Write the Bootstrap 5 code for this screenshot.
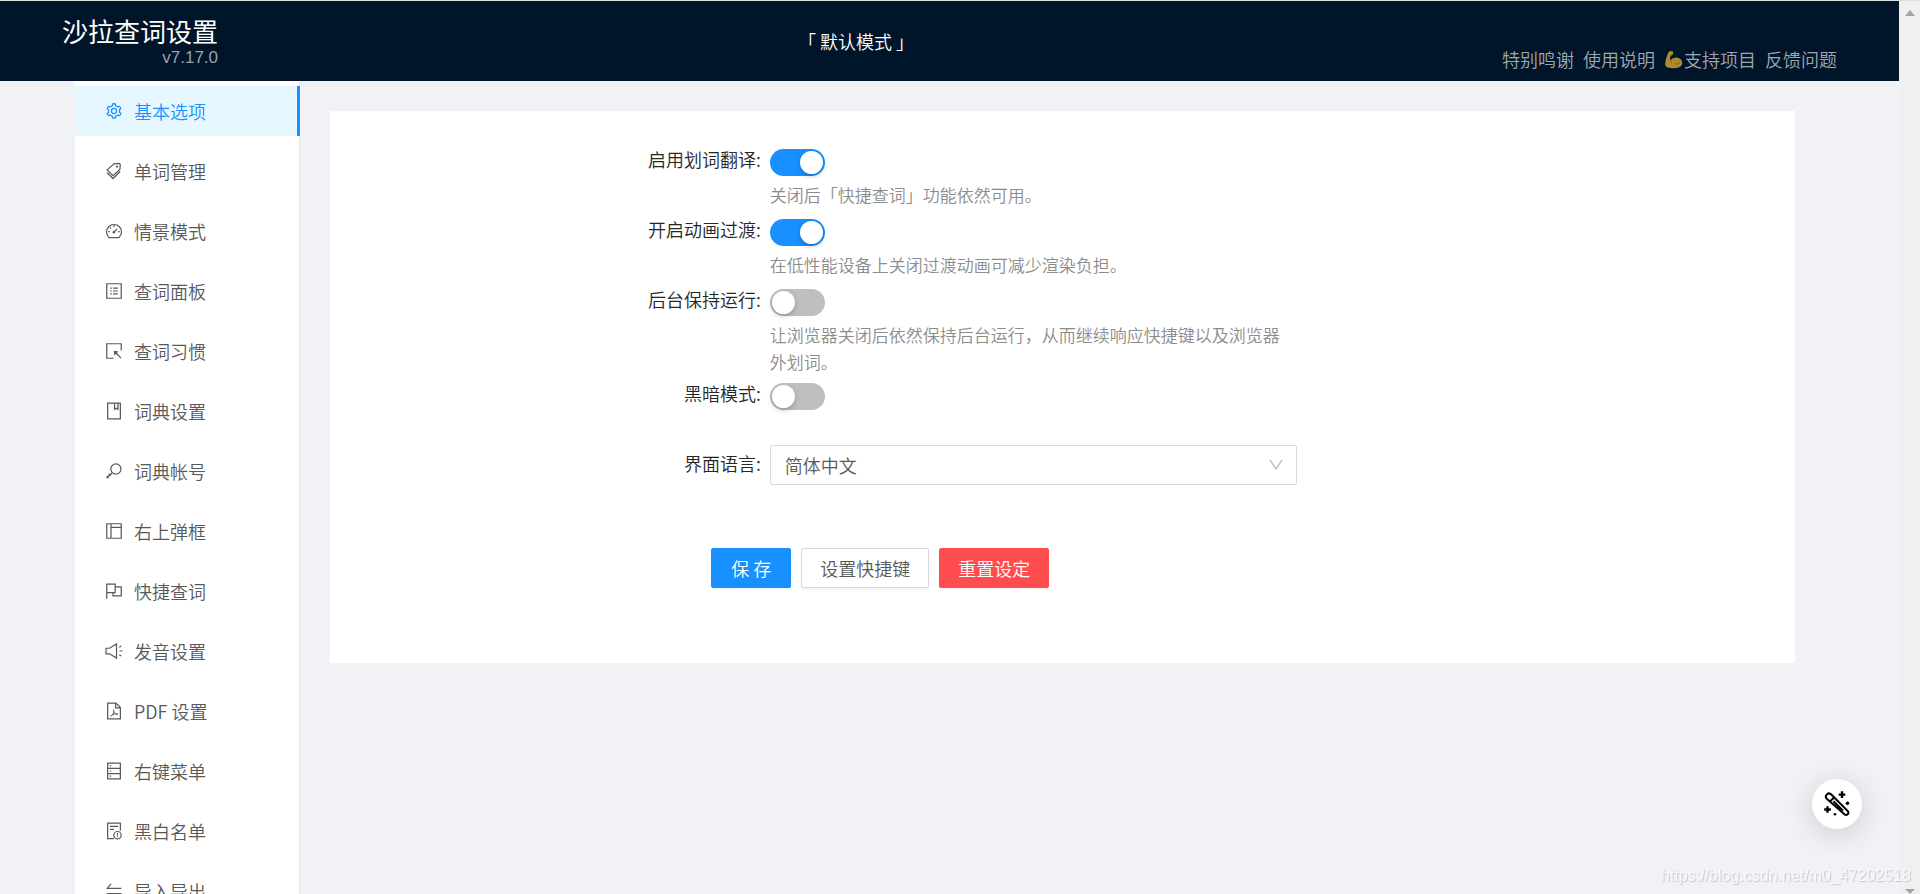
<!DOCTYPE html>
<html lang="zh-CN">
<head>
<meta charset="utf-8">
<meta name="viewport" content="width=device-width, initial-scale=1">
<title>沙拉查词设置</title>
<link href="https://cdn.jsdelivr.net/npm/bootstrap@5.3.0/dist/css/bootstrap.min.css" rel="stylesheet">
<style>
  :root { --blue: #1890ff; --ink: #595959; --navy: #001529; }
  body { font: 350 18px/27px "Noto Sans CJK SC", sans-serif; background: #f0f2f5; color: #262626; border-top: 1px solid #dcdfe3; overflow: hidden; }
  .topbar { background: var(--navy); height: 80px; padding: 0 62px; color: #fff; }
  .topbar h1 { font-size: 26px; line-height: 30px; font-weight: 400; padding-top: 15px; }
  .version { font: 17px/24px "Liberation Sans", sans-serif; color: #9aa3ac; }
  .toplinks { gap: 9px; padding-bottom: 8px; }
  .toplinks a { color: #a0a7ae; text-decoration: none; }
  .sidebar { width: 225px; padding-top: 5px; background: #fff; border-right: 1px solid #e8e8e8; }
  .sidebar .nav-link { height: 50px; padding: 0 0 0 30px; margin-right: -1px; gap: 11px; color: var(--ink); border-right: 3px solid transparent; }
  .sidebar .nav-link.active { color: var(--blue); background: #e6f7ff; border-color: var(--blue); }
  .sidebar .nav { gap: 10px; }
  .ico { width: 18px; height: 18px; fill: none; stroke: currentColor; stroke-width: 70; flex: none; }
  .ico .solid { fill: currentColor; stroke: none; }
  .shell { padding-left: 75px; }
  .panel { margin: 30px 104px 0 30px; padding: 30px 30px 75px; background: #fff; }
  .setting { display: grid; grid-template-columns: 7fr 9fr 8fr; }
  .setting > label { line-height: 36px; text-align: right; padding-right: 9px; }
  .form-switch.control { min-height: 40px; padding: 8px 0 0; }
  .form-switch .form-check-input { width: 55px; height: 27px; margin: 0; border: 0; background-color: #bfbfbf; display: block; float: none; position: relative; background-image: none; box-shadow: none; }
  .form-switch .form-check-input::after { content: ""; position: absolute; width: 23px; height: 23px; left: 2px; top: 2px; border-radius: 50%; background: #fff; box-shadow: 0 2px 5px rgba(0,35,11,.25); }
  .form-switch .form-check-input:checked { background-color: var(--blue); background-image: none; }
  .form-switch .form-check-input:checked::after { left: 30px; }
  .hint { color: #8c8c8c; font-size: 17px; min-height: 30px; grid-column: 2; }
  .form-select { height: 40px; border: 1px solid #d9d9d9; border-radius: 2px; padding: 0 36px 0 14px; font-size: 18px; font-weight: 350; color: var(--ink);
    background-image: url("data:image/svg+xml,%3csvg xmlns='http://www.w3.org/2000/svg' viewBox='0 0 16 16'%3e%3cpath fill='none' stroke='%23bfbfbf' stroke-width='1.4' d='M2 3l6 9 6-9'/%3e%3c/svg%3e"); background-size: 16px; background-position: right 12px center; }
  .panel .btn { min-width: 80px; height: 40px; padding: 0 18px; border-radius: 2px; font-size: 18px; line-height: 36px; font-weight: 350; border: 1px solid #d9d9d9; color: var(--ink); background: #fff; box-shadow: 0 2px 1px rgba(0,0,0,.04); }
  .panel .btn-primary { background: var(--blue); border-color: var(--blue); color: #fff; }
  .panel .btn-danger { background: #ff4d4f; border-color: #ff4d4f; color: #fff; }
  .actions { gap: 10px; padding-top: 33px; }
  .wand { right: 58px; bottom: 65px; width: 50px; height: 50px; border: 0; border-radius: 50%; background: #fff; box-shadow: 0 5px 30px rgba(0,0,0,.16); }
  .scrollrail { width: 21px; background: #f0f0f0; padding: 9px 0 0; }
  .site-url { right: 9px; bottom: 6px; font: 16px/24px "Liberation Sans", sans-serif; color: #f7f8fa; text-shadow: 1px 1px 1px #c4c6ca; }
</style>
</head>
<body class="vh-100 d-flex">
<div class="flex-grow-1 d-flex flex-column">
  <header class="topbar d-flex justify-content-between flex-shrink-0">
    <div class="text-end">
      <h1 class="m-0">沙拉查词设置</h1>
      <div class="version">v7.17.0</div>
    </div>
    <div class="align-self-center me-2">「 默认模式 」</div>
    <nav class="toplinks d-flex align-self-end" aria-label="链接">
      <a href="#">特别鸣谢</a><a href="#">使用说明</a>
      <a href="#" class="d-flex align-items-center"><svg width="20" height="20" viewBox="0 0 20 20" aria-hidden="true"><path fill="#b08b2e" d="M5 1.500C6 .8 8 .7 8.800 1.500c.8.800.5 2.800-.5 3.500-.6.500-1.500.3-1.800 1-.4 1.500-.5 3.500 0 4.500C8 8.300 11 7 14 7.800c3 .8 4.500 3.200 4.200 5.700-.4 3-4 4.700-8.200 4.700-4 0-8-.6-8.700-3C.7 12.500 3 4.500 5 1.500z"/><path fill="none" stroke="#7c601d" stroke-width="1" d="M6.500 10.500c.3 1 .8 1.500 1.500 2M10.500 13.500c2 1.200 4.500.6 5.500-1.500"/></svg>支持项目</a>
      <a href="#">反馈问题</a>
    </nav>
  </header>
  <div class="shell d-flex flex-grow-1">
    <aside class="sidebar flex-shrink-0">
      <nav class="nav flex-column flex-nowrap" aria-label="设置">
        <a class="nav-link active d-flex align-items-center" href="#"><svg class="ico" viewBox="0 0 1024 1024"><path class="solid" fill-rule="evenodd" d="M924.800 625.700l-65.500-56c3.100-19 4.700-38.400 4.700-57.800s-1.600-38.800-4.700-57.800l65.500-56a32 32 0 0 0 9.300-35.200l-.9-2.600a442 442 0 0 0-79.700-137.900l-1.800-2.100a32 32 0 0 0-35.100-9.500l-81.300 28.900c-30-24.600-63.500-44-99.700-57.600l-15.700-85a32 32 0 0 0-25.800-25.700l-2.700-.5c-52.100-9.400-106.900-9.400-159 0l-2.700.5a32 32 0 0 0-25.800 25.700l-15.800 85.400a352 352 0 0 0-99 57.400l-81.900-29.100a32 32 0 0 0-35.100 9.500l-1.800 2.100a446 446 0 0 0-79.700 137.900l-.9 2.600c-4.500 12.500-.8 26.500 9.300 35.200l66.300 56.600c-3.100 18.800-4.600 38-4.600 57.100 0 19.200 1.500 38.400 4.600 57.100L99 625.500a32 32 0 0 0-9.300 35.200l.9 2.600c18.100 50.400 44.900 96.900 79.700 137.900l1.800 2.100a32 32 0 0 0 35.100 9.500l81.900-29.100c29.800 24.500 63.100 43.900 99 57.400l15.800 85.400a32 32 0 0 0 25.800 25.700l2.700.5a449 449 0 0 0 159 0l2.700-.5a32 32 0 0 0 25.800-25.700l15.700-85a350 350 0 0 0 99.700-57.600l81.300 28.900a32 32 0 0 0 35.100-9.500l1.800-2.100c34.800-41.100 61.600-87.500 79.700-137.900l.9-2.600c4.500-12.300.8-26.300-9.300-35zM788.300 465.900c2.500 15.100 3.800 30.600 3.800 46.100s-1.300 31-3.800 46.100l-6.600 40.100 74.700 63.900a370 370 0 0 1-42.600 73.600L721 702.800l-31.400 25.800c-23.900 19.600-50.500 35-79.300 45.800l-38.100 14.300-17.900 97a377 377 0 0 1-85 0l-17.900-97.200-37.800-14.500c-28.500-10.800-55-26.200-78.700-45.700l-31.400-25.900-93.400 33.200c-17-22.900-31.200-47.600-42.600-73.600l75.500-64.500-6.500-40c-2.400-14.900-3.700-30.300-3.700-45.500 0-15.300 1.200-30.600 3.700-45.500l6.500-40-75.500-64.500c11.300-26.100 25.600-50.700 42.600-73.600l93.400 33.200 31.400-25.900c23.700-19.500 50.200-34.900 78.700-45.700l37.900-14.300 17.900-97.200c28.100-3.200 56.800-3.200 85 0l17.900 97 38.100 14.300c28.700 10.800 55.400 26.200 79.300 45.800l31.400 25.800 92.800-32.900c17 22.900 31.200 47.600 42.600 73.600L781.800 426l6.500 39.900z"/><circle cx="512" cy="512" r="144"/></svg>基本选项</a>
        <a class="nav-link d-flex align-items-center" href="#"><svg class="ico" viewBox="0 0 1024 1024"><path d="M510 105l300-25 60 60-25 290-390 350-330-330zM125 610l330 330 410-400"/><circle class="solid" cx="680" cy="265" r="60"/></svg>单词管理</a>
        <a class="nav-link d-flex align-items-center" href="#"><svg class="ico" viewBox="0 0 1024 1024"><path d="M230 885a425 425 0 1 1 564 0zM500 580l185-185M512 190v90M190 545h90M750 545h90M280 310l65 65"/><circle class="solid" cx="500" cy="580" r="70"/></svg>情景模式</a>
        <a class="nav-link d-flex align-items-center" href="#"><svg class="ico" viewBox="0 0 1024 1024"><path d="M100 100h824v824H100zM455 345h270M455 512h270M455 680h270M300 345h90M300 512h90M300 680h90"/></svg>查词面板</a>
        <a class="nav-link d-flex align-items-center" href="#"><svg class="ico" viewBox="0 0 1024 1024"><path d="M924 480V100H100v824h390M600 600l310 320"/><path class="solid" d="M500 500l270 35-235 240z"/></svg>查词习惯</a>
        <a class="nav-link d-flex align-items-center" href="#"><svg class="ico" viewBox="0 0 1024 1024"><path d="M150 65h724v894H150zM545 80v340l95-70 95 70V80"/></svg>词典设置</a>
        <a class="nav-link d-flex align-items-center" href="#"><svg class="ico" viewBox="0 0 1024 1024"><circle cx="620" cy="400" r="290"/><path d="M410 610L90 925M210 670l115 115M105 790l115 115"/></svg>词典帐号</a>
        <a class="nav-link d-flex align-items-center" href="#"><svg class="ico" viewBox="0 0 1024 1024"><path d="M100 100h824v824H100zM340 100v824M340 300h584"/></svg>右上弹框</a>
        <a class="nav-link d-flex align-items-center" href="#"><svg class="ico" viewBox="0 0 1024 1024"><path d="M100 85v870M100 120h480v490H100M580 280h344v510H455V610"/></svg>快捷查词</a>
        <a class="nav-link d-flex align-items-center" href="#"><svg class="ico" viewBox="0 0 1024 1024"><path d="M655 110v804L260 670H60V355h200zM830 512h160M810 300l115-75M810 725l115 75"/></svg>发音设置</a>
        <a class="nav-link d-flex align-items-center" href="#"><svg class="ico" viewBox="0 0 1024 1024"><path d="M150 65h470l254 255v639H150zM600 80v260h260"/><path stroke-width="55" d="M480 420c70 190-60 350-180 400M480 520c50 110 130 170 260 170-140-20-260 0-370 60"/></svg>PDF 设置</a>
        <a class="nav-link d-flex align-items-center" href="#"><svg class="ico" viewBox="0 0 1024 1024"><path d="M150 65h724v894H150zM150 365h724M150 660h724M270 220h80M270 512h80M270 810h80"/></svg>右键菜单</a>
        <a class="nav-link d-flex align-items-center" href="#"><svg class="ico" viewBox="0 0 1024 1024"><path d="M500 945H150V65h724v430M280 250h470M280 420h230"/><circle cx="710" cy="750" r="210"/><path d="M710 620v150M710 810v60"/></svg>黑白名单</a>
        <a class="nav-link d-flex align-items-center" href="#"><svg class="ico" viewBox="0 0 1024 1024"><path d="M340 110L130 365h790M100 660h790L680 915"/></svg>导入导出</a>
      </nav>
    </aside>
    <main class="flex-grow-1">
      <form class="panel">
        <div class="setting"><label for="sel">启用划词翻译:</label><div class="control form-switch"><input class="form-check-input" type="checkbox" role="switch" id="sel" checked></div><div class="hint">关闭后「快捷查词」功能依然可用。</div></div>
        <div class="setting"><label for="ani">开启动画过渡:</label><div class="control form-switch"><input class="form-check-input" type="checkbox" role="switch" id="ani" checked></div><div class="hint">在低性能设备上关闭过渡动画可减少渲染负担。</div></div>
        <div class="setting"><label for="bg">后台保持运行:</label><div class="control form-switch"><input class="form-check-input" type="checkbox" role="switch" id="bg"></div><div class="hint">让浏览器关闭后依然保持后台运行，从而继续响应快捷键以及浏览器外划词。</div></div>
        <div class="setting"><label for="dark">黑暗模式:</label><div class="control form-switch"><input class="form-check-input" type="checkbox" role="switch" id="dark"></div><div class="hint"></div></div>
        <div class="setting"><label for="lang">界面语言:</label><select class="form-select" id="lang"><option>简体中文</option></select><div class="hint"></div></div>
        <div class="row g-0"><div class="actions col-9 offset-3 d-flex">
          <button type="button" class="btn btn-primary">保 存</button>
          <button type="button" class="btn">设置快捷键</button>
          <button type="button" class="btn btn-danger">重置设定</button>
        </div></div>
      </form>
    </main>
  </div>
</div>
<div class="scrollrail d-flex flex-column align-items-center justify-content-between flex-shrink-0" aria-hidden="true">
  <svg width="10" height="6" viewBox="0 0 10 6"><path fill="#a3a3a3" d="M5 0l5 6H0z"/></svg>
  <svg width="10" height="6" viewBox="0 0 10 6"><path fill="#a3a3a3" d="M0 1h10L5 6z"/></svg>
</div>
<button type="button" class="wand position-fixed p-0 d-flex align-items-center justify-content-center" aria-label="魔棒"><svg width="26" height="26" viewBox="0 0 26 26" fill="none" stroke="#000" stroke-width="2"><path d="M2.800 7.800a3 3 0 0 1 4.500-4.300L24 20.300q1 1.600-.3 2.900-1.600 1.300-3 .3zM6 10.500l4-4M9.500 10.200l9.500 9.500"/><path stroke-width="2.400" d="M18 .3v6.600M14.700 3.600h6.600M3.500 15.200v6.600M.2 18.500h6.600"/><circle cx="23.500" cy="12.300" r="1.800" fill="#000" stroke="none"/><circle cx="11" cy="23.200" r="1.300" fill="#000" stroke="none"/></svg></button>
<div class="site-url position-fixed">https://blog.csdn.net/m0_47202518</div>
<script src="https://cdn.jsdelivr.net/npm/bootstrap@5.3.0/dist/js/bootstrap.bundle.min.js"></script>
</body>
</html>
